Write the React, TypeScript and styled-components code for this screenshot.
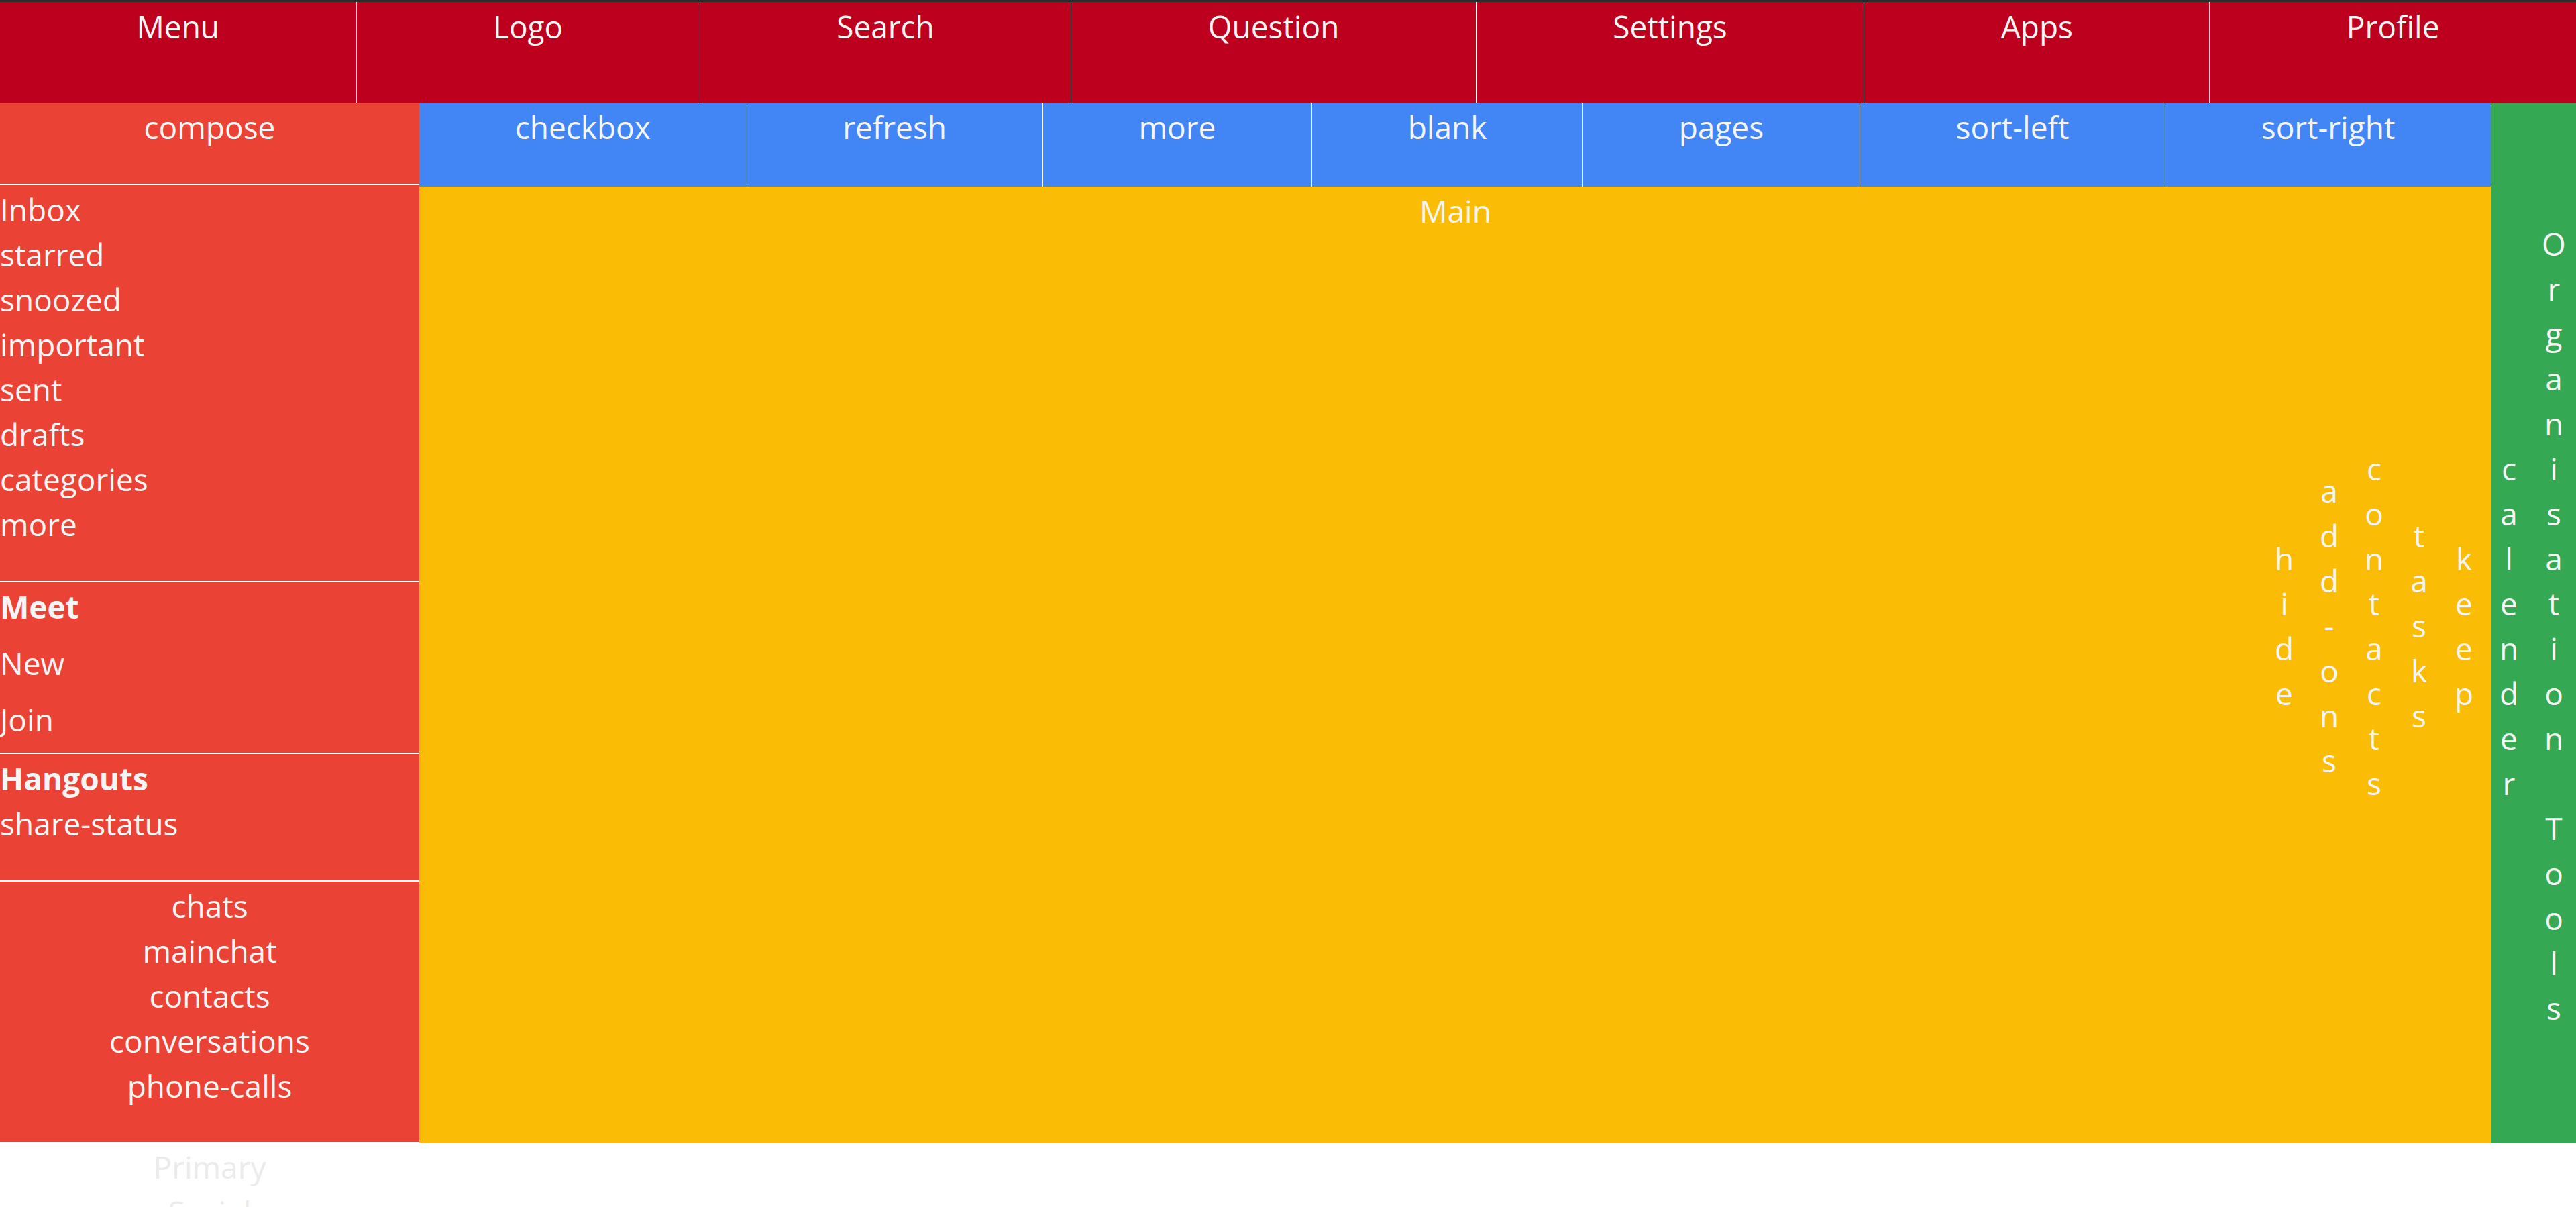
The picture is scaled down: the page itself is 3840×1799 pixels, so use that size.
import React from "react";
import styled, { createGlobalStyle } from "styled-components";

const GlobalStyle = createGlobalStyle`
  *, *::before, *::after { box-sizing: border-box; }
  html, body {
    margin: 0;
    padding: 0;
    background: #ffffff;
  }
  body {
    font-family: "Open Sans", "Noto Sans", "Liberation Sans", sans-serif;
    font-size: 46px;
    line-height: 67px;
    color: #f5f5f5;
  }
`;

const Layout = styled.div`
  display: grid;
  width: 100%;
  padding-bottom: 200px;
  grid-template-columns: 625px 1fr 126px;
  grid-template-rows: 153px 125px 1426px;
  grid-template-areas:
    "header header header"
    "side toolbar tools"
    "side main tools";
`;

const TopBar = styled.header`
  grid-area: header;
  display: flex;
  background: #bc001e;
  border-top: 3px solid #2b2b2b;
`;

const TopItem = styled.div`
  flex: 1 1 auto;
  padding-top: 3px;
  text-align: center;
  white-space: nowrap;
  &:not(:last-child) {
    border-right: 1px solid #ffffff;
  }
`;

const Sidebar = styled.aside`
  grid-area: side;
  align-self: start;
  height: 1549px;
  display: flex;
  flex-direction: column;
  background: #ea4335;
`;

const Compose = styled.div`
  flex: 0 0 auto;
  height: 123px;
  padding-top: 3px;
  text-align: center;
  border-bottom: 2px solid #ffffff;
`;

const Section = styled.section<{ $center?: boolean; $pad: number; $divider?: boolean; $faint?: boolean }>`
  flex: 0 0 auto;
  padding-top: 3px;
  padding-bottom: ${(p) => p.$pad}px;
  text-align: ${(p) => (p.$center ? "center" : "left")};
  color: ${(p) => (p.$faint ? "#ebebeb" : "inherit")};
  border-bottom: ${(p) => (p.$divider ? "2px solid #ffffff" : "none")};
`;

const NavItem = styled.div<{ $bold?: boolean; $space?: number }>`
  font-weight: ${(p) => (p.$bold ? 700 : 400)};
  padding-bottom: ${(p) => p.$space ?? 0}px;
  white-space: nowrap;
`;

const Toolbar = styled.nav`
  grid-area: toolbar;
  display: flex;
  background: #4285f4;
`;

const ToolItem = styled.div`
  flex: 1 1 auto;
  padding-top: 3px;
  text-align: center;
  white-space: nowrap;
  border-right: 1px solid #ffffff;
`;

const Main = styled.main`
  grid-area: main;
  padding-top: 3px;
  background: #fbbc05;
  text-align: center;
`;

const ToolRail = styled.div`
  grid-area: tools;
  min-width: 0;
  display: flex;
  justify-content: unsafe flex-end;
  align-items: center;
  padding-top: 12px;
  background: #34a853;
`;

const VerticalLabel = styled.span`
  flex: 0 0 auto;
  writing-mode: vertical-lr;
  text-orientation: upright;
  line-height: 67px;
  letter-spacing: 5px;
  white-space: nowrap;
`;

const topItems = ["Menu", "Logo", "Search", "Question", "Settings", "Apps", "Profile"];
const toolItems = ["checkbox", "refresh", "more", "blank", "pages", "sort-left", "sort-right"];
const mailItems = ["Inbox", "starred", "snoozed", "important", "sent", "drafts", "categories", "more"];
const chatItems = ["chats", "mainchat", "contacts", "conversations", "phone-calls"];
const tabItems = ["Primary", "Social"];
const railItems = ["hide", "add-ons", "contacts", "tasks", "keep", "calender", "Organisation Tools"];

export default function App() {
  return (
    <>
      <GlobalStyle />
      <Layout>
        <TopBar>
          {topItems.map((t) => (
            <TopItem key={t}>{t}</TopItem>
          ))}
        </TopBar>

        <Sidebar>
          <Compose>compose</Compose>
          <Section $pad={51} $divider>
            {mailItems.map((t) => (
              <NavItem key={t}>{t}</NavItem>
            ))}
          </Section>
          <Section $pad={0} $divider>
            <NavItem $bold $space={17}>Meet</NavItem>
            <NavItem $space={17}>New</NavItem>
            <NavItem $space={16}>Join</NavItem>
          </Section>
          <Section $pad={51} $divider>
            <NavItem $bold>Hangouts</NavItem>
            <NavItem>share-status</NavItem>
          </Section>
          <Section $pad={51} $center>
            {chatItems.map((t) => (
              <NavItem key={t}>{t}</NavItem>
            ))}
          </Section>
          <Section $pad={0} $center $faint>
            {tabItems.map((t) => (
              <NavItem key={t}>{t}</NavItem>
            ))}
          </Section>
        </Sidebar>

        <Toolbar>
          {toolItems.map((t) => (
            <ToolItem key={t}>{t}</ToolItem>
          ))}
        </Toolbar>

        <Main>Main</Main>

        <ToolRail>
          {railItems.map((t) => (
            <VerticalLabel key={t}>{t}</VerticalLabel>
          ))}
        </ToolRail>
      </Layout>
    </>
  );
}
